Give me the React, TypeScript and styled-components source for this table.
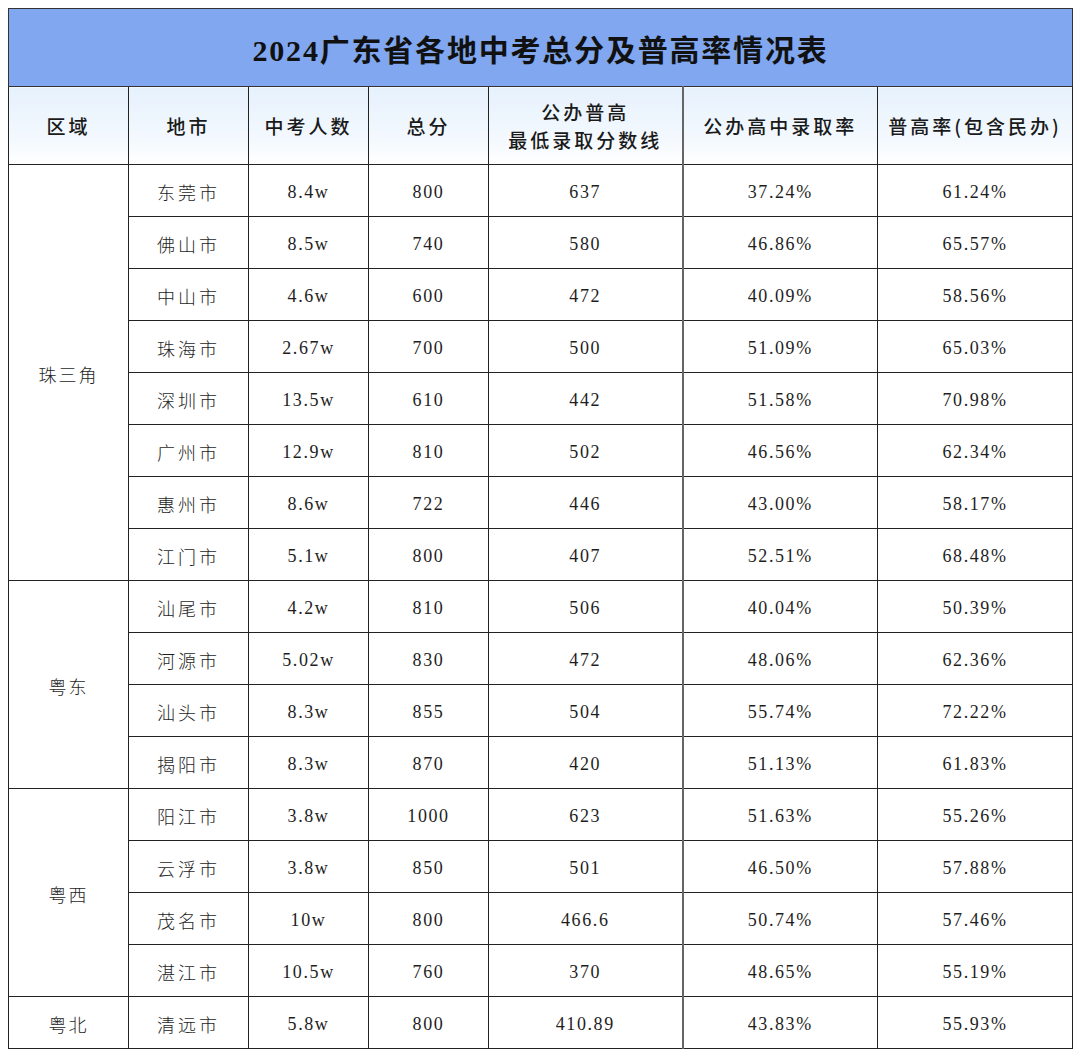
import React from "react";
import styled, { createGlobalStyle } from "styled-components";

const Global = createGlobalStyle`
  html, body { margin: 0; padding: 0; background: #ffffff; }
  body { padding: 8px 8px; }
`;

const Table = styled.table`
  border-collapse: collapse;
  table-layout: fixed;
  width: 1064px;
  color: #1e1e1e;
  font-family: "Liberation Serif", "Noto Sans CJK SC", serif;
`;

const TitleCell = styled.th`
  height: 77px;
  padding: 0;
  background: #80a7ef;
  border: 1px solid #333;
  font-family: "Liberation Serif", "Noto Sans CJK SC", serif;
  font-size: 30px;
  font-weight: 700;
  letter-spacing: 1.8px;
  text-align: center;
  color: #111;
`;

const HeadCell = styled.th<{ $heavy?: boolean }>`
  height: 77px;
  padding: 0;
  background: linear-gradient(180deg, #e6f1fc 0%, #f4f9fe 70%, #ffffff 100%);
  border: 1px solid #222;
  border-right: ${(p) => (p.$heavy ? "2px solid #666" : "1px solid #222")};
  font-family: "Noto Sans CJK SC", sans-serif;
  font-size: 19px;
  font-weight: 500;
  line-height: 28px;
  letter-spacing: 3px;
  text-align: center;
  color: #1a1a1a;
`;

const Cell = styled.td<{ $heavy?: boolean }>`
  height: 47px;
  padding: 4px 0 0;
  border: 1px solid #222;
  border-right: ${(p) => (p.$heavy ? "2px solid #666" : "1px solid #222")};
  font-family: "Liberation Serif", "Noto Sans CJK SC", serif;
  font-size: 18px;
  letter-spacing: 1.6px;
  text-align: center;
  background: #ffffff;
`;

const CityCell = styled(Cell)`
  height: 49px;
  padding: 2px 0 0;
  font-family: "Noto Sans CJK SC", sans-serif;
  font-weight: 300;
  letter-spacing: 3px;
`;

const RegionCell = styled(Cell)`
  height: 49px;
  padding: 2px 0 0;
  font-family: "Noto Sans CJK SC", sans-serif;
  font-weight: 300;
  letter-spacing: 2px;
`;

type Row = [string, string, string, string, string, string];

const groups: { region: string; rows: Row[] }[] = [
  {
    region: "珠三角",
    rows: [
      ["东莞市", "8.4w", "800", "637", "37.24%", "61.24%"],
      ["佛山市", "8.5w", "740", "580", "46.86%", "65.57%"],
      ["中山市", "4.6w", "600", "472", "40.09%", "58.56%"],
      ["珠海市", "2.67w", "700", "500", "51.09%", "65.03%"],
      ["深圳市", "13.5w", "610", "442", "51.58%", "70.98%"],
      ["广州市", "12.9w", "810", "502", "46.56%", "62.34%"],
      ["惠州市", "8.6w", "722", "446", "43.00%", "58.17%"],
      ["江门市", "5.1w", "800", "407", "52.51%", "68.48%"],
    ],
  },
  {
    region: "粤东",
    rows: [
      ["汕尾市", "4.2w", "810", "506", "40.04%", "50.39%"],
      ["河源市", "5.02w", "830", "472", "48.06%", "62.36%"],
      ["汕头市", "8.3w", "855", "504", "55.74%", "72.22%"],
      ["揭阳市", "8.3w", "870", "420", "51.13%", "61.83%"],
    ],
  },
  {
    region: "粤西",
    rows: [
      ["阳江市", "3.8w", "1000", "623", "51.63%", "55.26%"],
      ["云浮市", "3.8w", "850", "501", "46.50%", "57.88%"],
      ["茂名市", "10w", "800", "466.6", "50.74%", "57.46%"],
      ["湛江市", "10.5w", "760", "370", "48.65%", "55.19%"],
    ],
  },
  {
    region: "粤北",
    rows: [["清远市", "5.8w", "800", "410.89", "43.83%", "55.93%"]],
  },
];

export default function App() {
  return (
    <>
      <Global />
      <Table>
        <colgroup>
          <col style={{ width: 120 }} />
          <col style={{ width: 120 }} />
          <col style={{ width: 120 }} />
          <col style={{ width: 120 }} />
          <col style={{ width: 194 }} />
          <col style={{ width: 195 }} />
          <col style={{ width: 195 }} />
        </colgroup>
        <thead>
          <tr>
            <TitleCell colSpan={7}>2024广东省各地中考总分及普高率情况表</TitleCell>
          </tr>
          <tr>
            <HeadCell>区域</HeadCell>
            <HeadCell>地市</HeadCell>
            <HeadCell>中考人数</HeadCell>
            <HeadCell>总分</HeadCell>
            <HeadCell $heavy>
              公办普高
              <br />
              最低录取分数线
            </HeadCell>
            <HeadCell>公办高中录取率</HeadCell>
            <HeadCell>普高率(包含民办)</HeadCell>
          </tr>
        </thead>
        <tbody>
          {groups.map((g) =>
            g.rows.map((r, i) => (
              <tr key={g.region + r[0]}>
                {i === 0 && <RegionCell rowSpan={g.rows.length}>{g.region}</RegionCell>}
                <CityCell>{r[0]}</CityCell>
                <Cell>{r[1]}</Cell>
                <Cell>{r[2]}</Cell>
                <Cell $heavy>{r[3]}</Cell>
                <Cell>{r[4]}</Cell>
                <Cell>{r[5]}</Cell>
              </tr>
            ))
          )}
        </tbody>
      </Table>
    </>
  );
}
